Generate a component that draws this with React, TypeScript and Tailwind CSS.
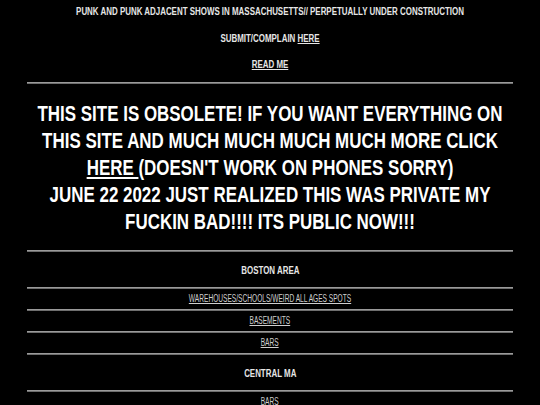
import React from "react";

const Hr = () => (
  <div className="mx-[27px] border-t border-b border-t-[#9a9a9a] border-b-[#6e6e6e]" />
);

const Narrow = ({ children, scale }: { children: React.ReactNode; scale: string }) => (
  <div className={"flex flex-col items-center origin-center " + scale}>{children}</div>
);

const HEAD = "scale-x-[0.72]";
const BIG = "scale-x-[0.77]";
const SMALL = "scale-x-[0.66]";

export default function App() {
  return (
    <div
      className="min-h-[405px] overflow-hidden bg-black text-white text-center font-bold"
      style={{ fontFamily: '"Liberation Sans", Arial, sans-serif' }}
    >
      <div className="pt-[3px] text-[11.5px] leading-[16px] text-[#e6e6e6]">
        <Narrow scale="scale-x-[0.69]">
          <div className="whitespace-nowrap">
            PUNK AND PUNK ADJACENT SHOWS IN MASSACHUSETTS// PERPETUALLY UNDER CONSTRUCTION
          </div>
        </Narrow>
      </div>
      <div className="mt-[11px] text-[11.5px] leading-[16px] text-[#e6e6e6]">
        <Narrow scale="scale-x-[0.69]">
          <div className="whitespace-nowrap">
            SUBMIT/COMPLAIN <span className="underline">HERE</span>
          </div>
        </Narrow>
      </div>
      <div className="mt-[10px] text-[11.5px] leading-[16px] text-[#e6e6e6]">
        <Narrow scale="scale-x-[0.69]">
          <div className="whitespace-nowrap underline">READ ME</div>
        </Narrow>
      </div>
      <div className="mt-[10px]">
        <Hr />
      </div>
      <div className="mt-[16px] text-[22px] leading-[27px]">
        <Narrow scale={BIG}>
          <div className="whitespace-nowrap">THIS SITE IS OBSOLETE! IF YOU WANT EVERYTHING ON</div>
          <div className="whitespace-nowrap">THIS SITE AND MUCH MUCH MUCH MUCH MORE CLICK</div>
          <div className="whitespace-nowrap">
            <span className="underline">HERE </span>(DOESN'T WORK ON PHONES SORRY)
          </div>
          <div className="whitespace-nowrap">JUNE 22 2022 JUST REALIZED THIS WAS PRIVATE MY</div>
          <div className="whitespace-nowrap">FUCKIN BAD!!!! ITS PUBLIC NOW!!!</div>
        </Narrow>
      </div>
      <div className="mt-[15px]">
        <Hr />
      </div>
      <div className="h-[35px] flex items-center justify-center text-[11px] leading-[16px] text-[#e6e6e6]">
        <Narrow scale={HEAD}>
          <div className="whitespace-nowrap">BOSTON AREA</div>
        </Narrow>
      </div>
      <Hr />
      <div className="h-[20px] flex items-center justify-center text-[10px] leading-[14px] font-normal text-[#cfcfcf]">
        <Narrow scale={SMALL}>
          <div className="whitespace-nowrap underline">WAREHOUSES/SCHOOLS/WEIRD ALL AGES SPOTS</div>
        </Narrow>
      </div>
      <Hr />
      <div className="h-[20px] flex items-center justify-center text-[10px] leading-[14px] font-normal text-[#cfcfcf]">
        <Narrow scale={SMALL}>
          <div className="whitespace-nowrap underline">BASEMENTS</div>
        </Narrow>
      </div>
      <Hr />
      <div className="h-[20px] flex items-center justify-center text-[10px] leading-[14px] font-normal text-[#cfcfcf]">
        <Narrow scale={SMALL}>
          <div className="whitespace-nowrap underline">BARS</div>
        </Narrow>
      </div>
      <Hr />
      <div className="h-[35px] flex items-center justify-center text-[11px] leading-[16px] text-[#e6e6e6]">
        <Narrow scale={HEAD}>
          <div className="whitespace-nowrap">CENTRAL MA</div>
        </Narrow>
      </div>
      <Hr />
      <div className="h-[20px] flex items-center justify-center text-[10px] leading-[14px] font-normal text-[#cfcfcf]">
        <Narrow scale={SMALL}>
          <div className="whitespace-nowrap underline">BARS</div>
        </Narrow>
      </div>
    </div>
  );
}
